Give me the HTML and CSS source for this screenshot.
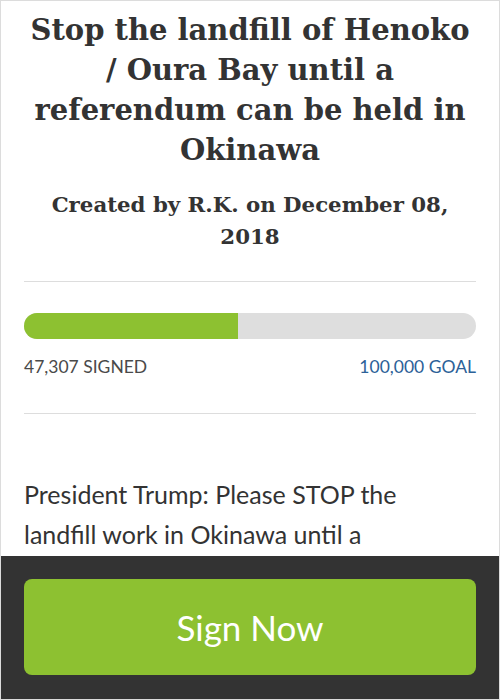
FILE: index.html
```html
<!DOCTYPE html>
<html lang="en">
    <head>
        <meta charset="UTF-8">
        <meta name="viewport" content="width=device-width, initial-scale=1.0">
        <title>Stop the landfill of Henoko</title>
        <link rel="stylesheet" href="styles.css">
    </head>
    <body>
        <div class="page">
            <div class="content">
                <h1 class="title">Stop the landfill of Henoko / Oura Bay until a referendum can be held in Okinawa</h1>
                <h2 class="byline">Created by R.K. on December 08, 2018</h2>

                <div class="progress-block">
                    <div class="progress">
                        <div class="progress-fill" style="width: 47.3%"></div>
                    </div>
                    <div class="progress-labels">
                        <span class="signed">47,307 SIGNED</span>
                        <span class="goal">100,000 GOAL</span>
                    </div>
                </div>

                <p class="description">President Trump: Please STOP the landfill work in Okinawa until a</p>
            </div>

            <div class="footer">
                <button class="sign-btn">Sign Now</button>
            </div>
        </div>
    </body>
</html>
```

FILE: styles.css
```css
html, body {
    margin: 0;
    padding: 0;
}

body {
    font-family: Lato, "Open Sans", sans-serif;
    background: white;
    color: #333;
}

.page {
    height: 700px;
    box-sizing: border-box;
    border: 1px solid #dcdcdc;
    display: flex;
    flex-direction: column;
    overflow: hidden;
}

.content {
    flex: 1;
    overflow: hidden;
    padding: 9px 23px 0;
}

.title {
    font-family: "DejaVu Serif", serif;
    font-weight: bold;
    font-size: 29px;
    line-height: 40px;
    text-align: center;
    color: #333;
    margin: 0;
}

.byline {
    font-family: "DejaVu Serif", serif;
    font-weight: bold;
    font-size: 21.3px;
    line-height: 32px;
    text-align: center;
    color: #333;
    margin: 19px 0 0;
}

.progress-block {
    margin-top: 28px;
    border-top: 1px solid #ddd;
    border-bottom: 1px solid #ddd;
    padding: 31px 0 34px;
}

.progress {
    height: 26px;
    background-color: #dedede;
    border-radius: 13px;
    overflow: hidden;
}

.progress-fill {
    height: 100%;
    background-color: #8dc131;
}

.progress-labels {
    display: flex;
    justify-content: space-between;
    margin-top: 16px;
    font-size: 17.5px;
    line-height: 24px;
}

.signed {
    color: #4a4a4a;
}

.goal {
    color: #2c6198;
}

.description {
    max-width: 420px;
    margin: 60px 0 0;
    font-size: 25px;
    line-height: 40px;
    color: #333;
}

.footer {
    flex: none;
    height: 143px;
    background-color: #333;
    padding: 23px 23px 0;
    box-sizing: border-box;
}

.sign-btn {
    display: block;
    width: 100%;
    height: 96px;
    border: none;
    border-radius: 8px;
    background-color: #8dc131;
    color: white;
    font-family: Lato, "Open Sans", sans-serif;
    font-size: 35px;
    cursor: pointer;
}
```
